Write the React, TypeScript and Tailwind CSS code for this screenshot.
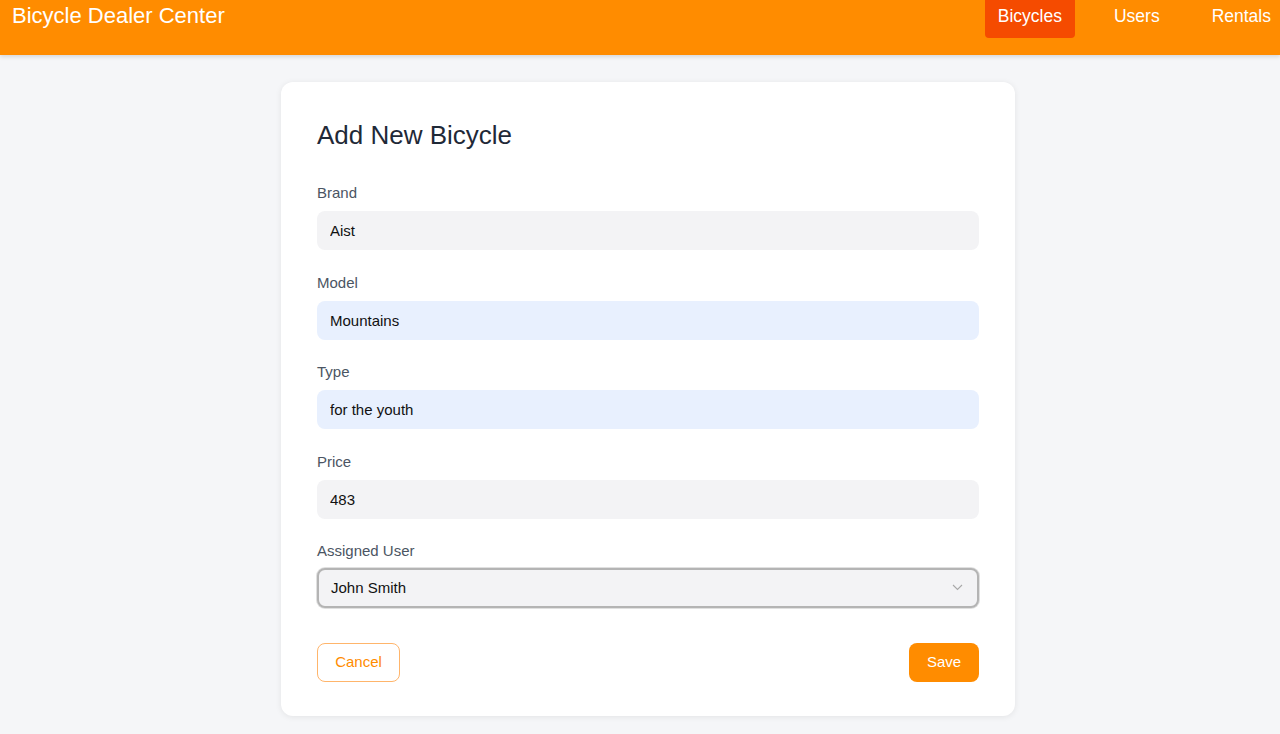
import React from 'react';

const font = { fontFamily: '"Liberation Sans", Arial, sans-serif' };

const Field: React.FC<{ label: string; value: string; autofill?: boolean }> = ({ label, value, autofill }) => (
  <div className="flex flex-col">
    <label className="h-5 text-[15px] leading-5 text-[#4b5563]">{label}</label>
    <input
      readOnly
      value={value}
      className={`mt-2 h-[39px] w-full rounded-lg px-[13px] text-[15px] text-[#111] outline-none ${
        autofill ? 'bg-[#e8f0fe]' : 'bg-[#f3f3f5]'
      }`}
    />
  </div>
);

export default function App() {
  return (
    <div className="min-h-[734px] bg-[#f5f6f8]" style={font}>
      <header className="flex h-[55px] items-start justify-between overflow-hidden bg-[#ff8c00] pl-3 shadow-[0_2px_4px_rgba(0,0,0,0.12)]">
        <div className="pt-[3px] text-[22px] leading-[26px] text-white">Bicycle Dealer Center</div>
        <nav className="mr-[-4px] flex items-start gap-[26px]">
          <a className="flex h-[38px] items-center rounded-b-[4px] bg-[#f54b00] px-[13px] pb-[6px] text-[17.5px] text-white">
            Bicycles
          </a>
          <a className="flex h-[38px] items-center px-[13px] pb-[6px] text-[17.5px] text-white">Users</a>
          <a className="flex h-[38px] items-center px-[13px] pb-[6px] text-[17.5px] text-white">Rentals</a>
        </nav>
      </header>

      <main className="pt-[27px] pb-[18px]">
        <div className="ml-[281px] w-[734px] rounded-xl bg-white px-[36px] pt-[35px] pb-[34px] shadow-[0_1px_6px_rgba(0,0,0,0.08)]">
          <h1 className="h-9 text-[26px] leading-9 text-[#1f2937]">Add New Bicycle</h1>

          <div className="mt-[30px] flex flex-col gap-[22.5px]">
            <Field label="Brand" value="Aist" />
            <Field label="Model" value="Mountains" autofill />
            <Field label="Type" value="for the youth" autofill />
            <Field label="Price" value="483" />

            <div className="flex flex-col">
              <label className="h-5 text-[15px] leading-5 text-[#4b5563]">Assigned User</label>
              <div className="relative mt-[7px]">
                <div className="flex h-[40px] w-full items-center rounded-lg border-2 border-[#b4b4b4] bg-[#f3f3f5] px-[12px] text-[15px] text-[#111] shadow-[0_0_0_1px_#e0e0e0]">
                  John Smith
                </div>
                <svg
                  className="absolute right-[16px] top-[16px]"
                  width="11"
                  height="7"
                  viewBox="0 0 11 7"
                  fill="none"
                >
                  <path d="M1 1l4.5 4.5L10 1" stroke="#a8a8a8" strokeWidth="1.1" />
                </svg>
              </div>
            </div>
          </div>

          <div className="mt-[35px] flex items-center justify-between">
            <button className="h-[39px] w-[83px] rounded-lg border border-[#ffb56b] bg-white text-[15px] text-[#ff8c00]">
              Cancel
            </button>
            <button className="h-[39px] w-[70px] rounded-lg bg-[#ff8c00] text-[15px] text-white">Save</button>
          </div>
        </div>
      </main>
    </div>
  );
}
